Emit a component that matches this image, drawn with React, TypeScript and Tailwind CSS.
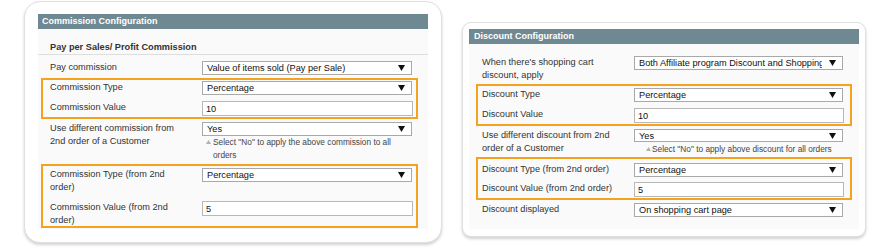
import React from "react";

const Arrow = () => (
  <svg width="7" height="6" viewBox="0 0 7 6" className="shrink-0">
    <path d="M0 0H7L3.5 6Z" fill="#111" />
  </svg>
);

const Up = () => (
  <svg width="5" height="4" viewBox="0 0 5 4" className="shrink-0">
    <path d="M0 4H5L2.5 0Z" fill="#b0b0b0" />
  </svg>
);

function Select({ text, w, h = "h-[14px]" }: { text: string; w: string; h?: string }) {
  return (
    <div className={`${w} ${h} flex items-center border border-[#a9a9a9] bg-white pl-[4px] pr-[6px]`}>
      <span className="flex-1 overflow-hidden whitespace-nowrap text-[9.2px] leading-[12px] text-[#111] mr-[7px]">
        {text}
      </span>
      <Arrow />
    </div>
  );
}

function Input({ value, w }: { value: string; w: string }) {
  return (
    <div className={`${w} h-[15px] flex items-center border border-[#b8b8b8] bg-white pl-[3px] text-[9.2px] leading-[12px] text-[#111]`}>
      {value}
    </div>
  );
}

function Row({
  lines,
  children,
  className = "",
}: {
  lines: string[];
  children: React.ReactNode;
  className?: string;
}) {
  return (
    <div className={`flex items-start ${className}`}>
      <div className="w-[152px] shrink-0 text-[9.2px] leading-[13px] text-[#333]">
        {lines.map((l, i) => (
          <div key={i} className="whitespace-nowrap">
            {l}
          </div>
        ))}
      </div>
      <div className="flex flex-col">{children}</div>
    </div>
  );
}

export default function App() {
  return (
    <div className="w-[890px] h-[250px] bg-white flex items-start pl-[24px] font-['Liberation_Sans',Arial,sans-serif] overflow-hidden">
      {/* Left card */}
      <div className="mt-[1px] w-[418px] rounded-[16px] border border-[#e0e0e0] bg-white pt-[12px] px-[13px] pb-[13px] shadow-[0_2px_3px_rgba(0,0,0,0.18)]">
        <div className="h-[15px] bg-[#6f8992] pl-[4px] text-[9px] leading-[14px] font-bold text-white">
          Commission Configuration
        </div>
        <div className="h-[200px] bg-[#fafafa]">
          <div className="h-[26px] border-b border-[#dedede] pl-[12px] pt-[12px] text-[9.2px] leading-[12px] font-bold text-[#333]">
            Pay per Sales/ Profit Commission
          </div>
          <Row lines={["Pay commission"]} className="mt-[6px] pl-[12px]">
            <Select w="w-[210px]" text="Value of items sold (Pay per Sale)" />
          </Row>
          <div className="mt-[3px] ml-[3px] w-[377px] border-2 border-[#f5a21e] pt-[1px] pb-[1px] pl-[7px]">
            <Row lines={["Commission Type"]}>
              <Select w="w-[210px]" text="Percentage" />
            </Row>
            <Row lines={["Commission Value"]} className="mt-[6px]">
              <Input w="w-[211px]" value="10" />
            </Row>
          </div>
          <Row lines={["Use different commission from", "2nd order of a Customer"]} className="mt-[3px] pl-[12px] h-[40px]">
            <Select w="w-[210px]" text="Yes" />
            <div className="flex items-start ml-[4px] w-[206px]">
              <div className="mt-[4px]">
                <Up />
              </div>
              <div className="ml-[2px] text-[8.3px] leading-[13px] text-[#444]">
                Select "No" to apply the above commission to all orders
              </div>
            </div>
          </Row>
          <div className="mt-[2px] ml-[3px] w-[377px] border-2 border-[#f5a21e] pt-[2px] pl-[7px]">
            <Row lines={["Commission Type (from 2nd", "order)"]} className="h-[26px]">
              <Select w="w-[210px]" text="Percentage" />
            </Row>
            <Row lines={["Commission Value (from 2nd", "order)"]} className="mt-[7px] h-[25px]">
              <Input w="w-[211px]" value="5" />
            </Row>
          </div>
        </div>
      </div>

      {/* Right card */}
      <div className="mt-[22px] ml-[20px] w-[404px] rounded-[9px] border border-[#e0e0e0] bg-white pt-[6px] px-[6px] pb-[7px] shadow-[0_2px_3px_rgba(0,0,0,0.18)]">
        <div className="h-[15px] bg-[#6f8992] pl-[5px] text-[9px] leading-[14px] font-bold text-white">
          Discount Configuration
        </div>
        <div className="h-[185px] bg-[#fafafa]">
          <Row lines={["When there's shopping cart", "discount, apply"]} className="pt-[12px] pl-[13px] h-[38px]">
            <Select w="w-[209px]" text="Both Affiliate program Discount and Shopping Cart Discount" />
          </Row>
          <div className="mt-[2px] ml-[7px] w-[376px] border-2 border-[#f5a21e] pt-[2px] pb-[1px] pl-[4px]">
            <Row lines={["Discount Type"]}>
              <Select w="w-[209px]" text="Percentage" />
            </Row>
            <Row lines={["Discount Value"]} className="mt-[6px]">
              <Input w="w-[210px]" value="10" />
            </Row>
          </div>
          <Row lines={["Use different discount from 2nd", "order of a Customer"]} className="mt-[3px] pl-[13px] h-[27px]">
            <Select w="w-[209px]" h="h-[13px]" text="Yes" />
            <div className="flex items-start ml-[12px] mt-[1px]">
              <div className="mt-[4px]">
                <Up />
              </div>
              <div className="ml-[1px] whitespace-nowrap text-[8.3px] leading-[13px] text-[#444]">
                Select "No" to apply above discount for all orders
              </div>
            </div>
          </Row>
          <div className="mt-[1px] ml-[7px] w-[376px] border-2 border-[#f5a21e] pt-[4px] pb-[1px] pl-[4px]">
            <Row lines={["Discount Type (from 2nd order)"]}>
              <Select w="w-[209px]" text="Percentage" />
            </Row>
            <Row lines={["Discount Value (from 2nd order)"]} className="mt-[5px]">
              <Input w="w-[210px]" value="5" />
            </Row>
          </div>
          <Row lines={["Discount displayed"]} className="mt-[3px] pl-[13px]">
            <Select w="w-[209px]" text="On shopping cart page" />
          </Row>
        </div>
      </div>
    </div>
  );
}
